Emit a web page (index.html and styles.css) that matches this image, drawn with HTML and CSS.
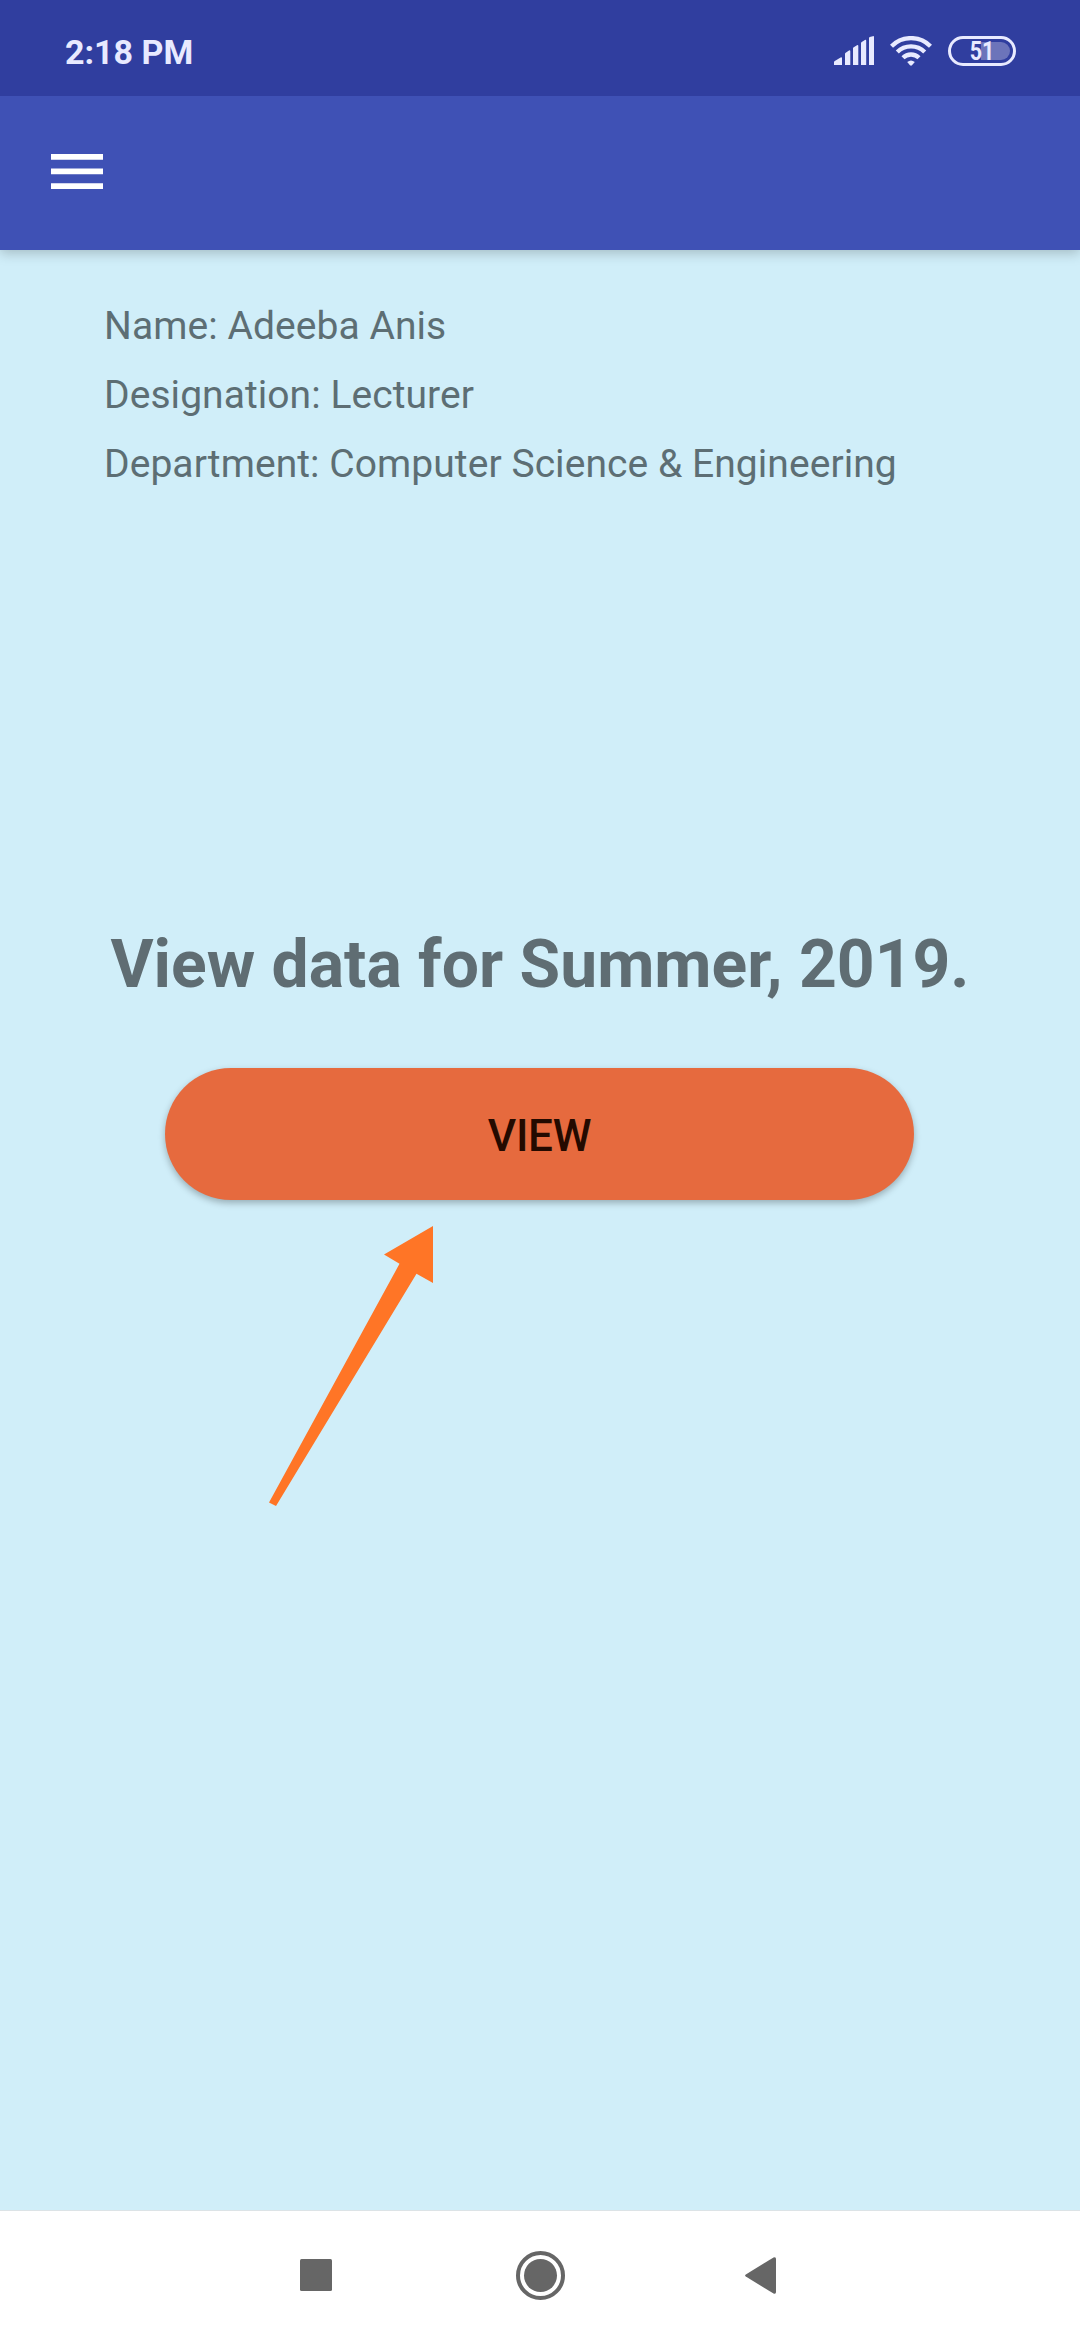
FILE: index.html
```html
<!DOCTYPE html>
<html lang="en">
<head>
<meta charset="utf-8">
<title>View data</title>
<link rel="stylesheet" href="styles.css">
</head>
<body>
<div class="screen">
  <div class="status-bar">
    <span class="clock">2:18 PM</span>
    <div class="status-icons">
      <svg class="signal" width="40" height="29" viewBox="0 0 40 29" fill="#e8eaff">
        <path d="M0 29v-2.600q0-.8.8-1.300L6.600 21.600q1.400-.8 1.400.8V29zM11 29V18q0-.7.7-1.200L15 14.600q1.300-.8 1.300.8V29zM19 29V12.500q0-.7.7-1.200L23 9.200q1.300-.8 1.300.8V29zM27 29V7.300q0-.7.7-1.200L30.900 4q1.300-.8 1.300.8V29zM35 29V2.200q0-.7.7-1.200L38.800.2q1.200-.5 1.200.8V29z"/>
      </svg>
      <svg class="wifi" width="42" height="30" viewBox="0 0 42 30" fill="none" stroke="#e8eaff" stroke-width="4.300">
        <path d="M1.500 10.200A27.500 27.500 0 0 1 40.500 10.200"/>
        <path d="M7.300 16A19.400 19.400 0 0 1 34.700 16"/>
        <path d="M13 21.800A11.300 11.300 0 0 1 29 21.800"/>
        <path d="M17.200 26q3.800-3.200 7.600 0L22 29.300q-1 .9-2 0z" fill="#e8eaff" stroke="none"/>
      </svg>
      <div class="battery"><span class="battery-level"></span><span class="battery-text">51</span></div>
    </div>
  </div>
  <header class="app-bar">
    <svg width="52" height="35" viewBox="0 0 52 35" fill="#fff">
      <path d="M0 0h52v5.700H0zM0 14.500h52v5.700H0zM0 29.200h52v5.800H0z"/>
    </svg>
  </header>
  <main class="content">
    <div class="profile">
      <p class="name">Name: Adeeba Anis</p>
      <p class="designation">Designation: Lecturer</p>
      <p class="department">Department: Computer Science &amp; Engineering</p>
    </div>
    <h1 class="title"><span>View data for Summer, 2019.</span></h1>
    <button class="view-button" type="button">VIEW</button>
    <svg class="pointer" width="166" height="282" viewBox="0 0 166 282" fill="#ff7526">
      <path d="M164 0V57L147.500 47.800 7 280 0 276.500 130.500 37.800 115 28.500z"/>
    </svg>
  </main>
  <nav class="nav-bar">
    <svg width="32" height="32" viewBox="0 0 32 32"><rect width="32" height="32" rx="1.500" fill="#666"/></svg>
    <svg width="50" height="50" viewBox="0 0 50 50"><circle cx="24.500" cy="25.500" r="22.500" fill="none" stroke="#666" stroke-width="4"/><circle cx="24.500" cy="25.500" r="16.500" fill="#666"/></svg>
    <svg width="32" height="38" viewBox="0 -.5 32 38"><path d="M.8 18Q-.6 19 .8 20.100L28.500 37q2.500 1 2.500-1.500v-33Q31 0 28.500 1z" fill="#666"/></svg>
  </nav>
</div>
</body>
</html>
```
FILE: styles.css
```css
* { box-sizing: border-box; }

body {
  margin: 0;
  font-family: Roboto, "Noto Sans", sans-serif;
}

p, h1 { margin: 0; }
svg { display: block; flex: none; }

.screen {
  display: flex;
  flex-direction: column;
  width: 1080px;
  height: 2340px;
  overflow: hidden;
  background: #d0eef9;
}

.status-bar {
  display: flex;
  justify-content: space-between;
  flex: none;
  height: 96px;
  padding: 0 64px 0 65px;
  background: #303e9f;
  color: #e8eaff;
}

.clock {
  padding-top: 8px;
  font-size: 34px;
  font-weight: 700;
  line-height: 88px;
}

.status-icons {
  display: flex;
  padding-top: 36px;
}

.wifi { margin: 0 16px; }

.battery {
  position: relative;
  width: 68px;
  height: 30px;
  border: 3px solid #e8eaff;
  border-radius: 15px;
  text-align: center;
}

.battery-level {
  position: absolute;
  top: 3px;
  right: 3px;
  width: 29px;
  height: 18px;
  border-radius: 0 9px 9px 0;
  background: #6c74ba;
}

.battery-text {
  position: relative;
  display: block;
  font-size: 25px;
  font-weight: 700;
  line-height: 25px;
  transform: scaleX(0.86);
}

.app-bar {
  z-index: 1;
  display: flex;
  flex: none;
  height: 154px;
  padding: 58px 51px;
  background: #3f51b5;
  box-shadow: 0 3px 12px rgba(0, 0, 0, 0.22);
  clip-path: inset(0 0 -20px 0);
}

.content {
  display: flex;
  flex-direction: column;
  flex: 1;
  padding-top: 42px;
}

.profile {
  padding-left: 104px;
  color: #5d6e74;
  font-size: 39px;
  letter-spacing: 0.06px;
  line-height: 69px;
  white-space: nowrap;
}

.title {
  margin-top: 426px;
  color: #5f6d73;
  font-size: 66px;
  font-weight: 700;
  line-height: 80px;
  text-align: center;
  white-space: nowrap;
}

.view-button {
  align-self: flex-start;
  width: 749px;
  height: 132px;
  margin: 63px 0 0 165px;
  padding: 4px 0 0;
  border: 0;
  border-radius: 66px;
  background: #e66a3e;
  box-shadow: 0 3px 7px rgba(0, 0, 0, 0.28);
  color: #240a00;
  font-family: inherit;
  font-size: 44px;
  font-weight: 500;
  letter-spacing: -0.3px;
}

.pointer { margin: 26px 0 0 269px; }

.nav-bar {
  display: flex;
  align-items: center;
  flex: none;
  height: 130px;
  padding: 0 0 1px 300px;
  border-top: 1px solid #dce3e6;
  background: #fff;
}

.nav-bar svg:nth-child(2) { margin: 0 179px 0 184px; }
```
